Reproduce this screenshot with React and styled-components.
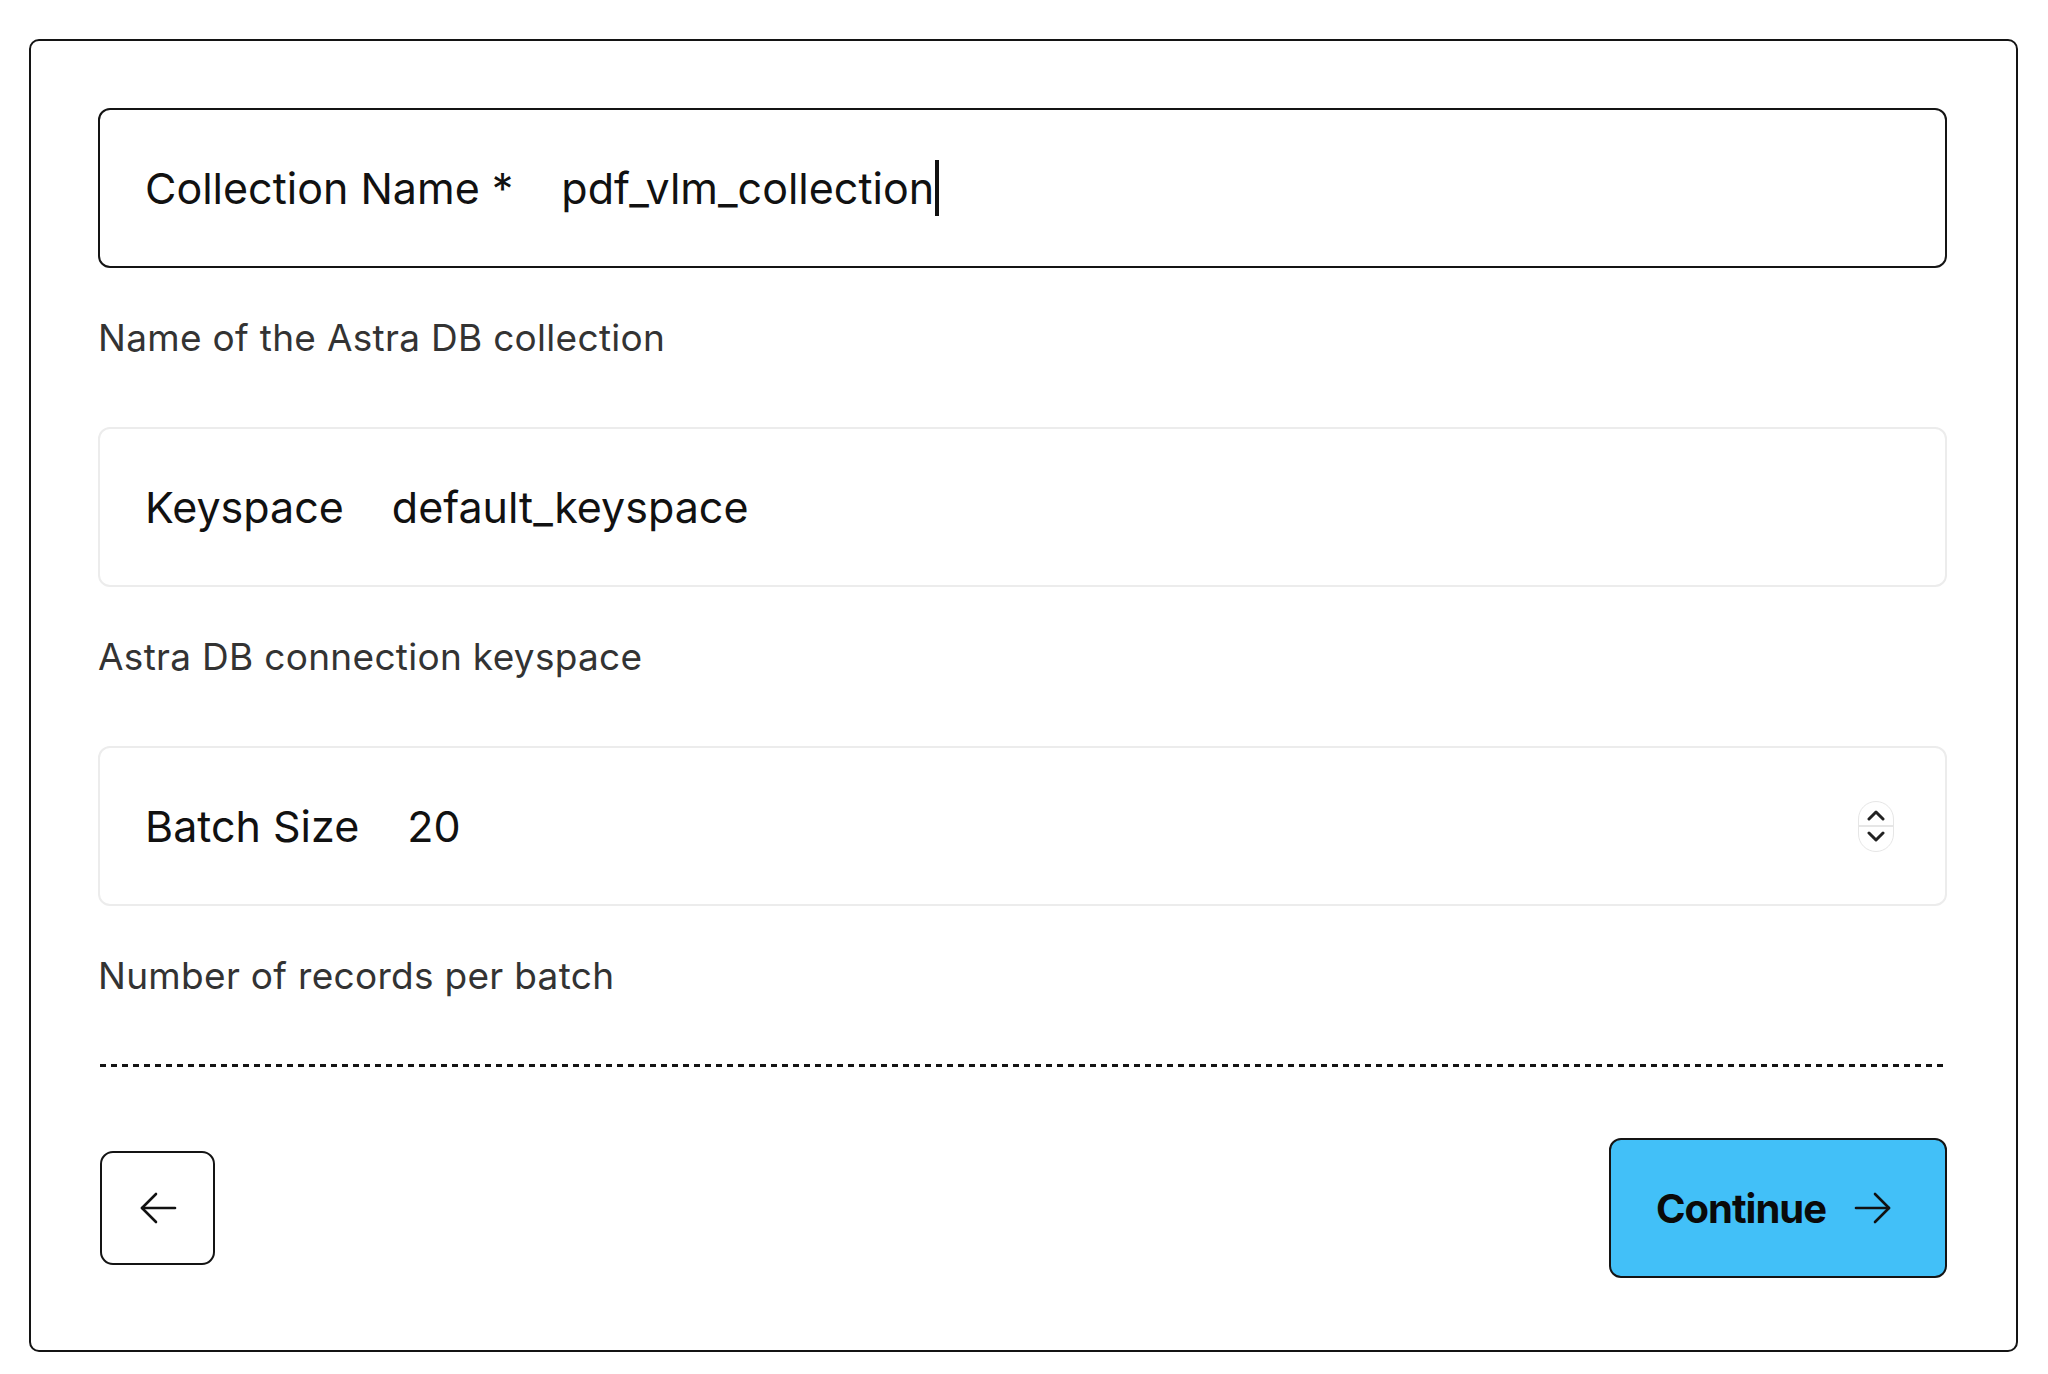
import React from "react";
import styled, { createGlobalStyle } from "styled-components";

const GlobalStyle = createGlobalStyle`
  html, body {
    margin: 0;
    padding: 0;
    background: #ffffff;
  }
  body {
    font-family: Inter, "Noto Sans", "Liberation Sans", sans-serif;
    color: #111111;
  }
  * {
    box-sizing: border-box;
  }
`;

const Page = styled.div`
  padding: 39px 0 0 29px;
`;

const Card = styled.div`
  width: 1989px;
  border: 2.5px solid #141414;
  border-radius: 10px;
  padding: 67px 69px 72px 67px;
  display: flex;
  flex-direction: column;
`;

const Fields = styled.div`
  display: flex;
  flex-direction: column;
  gap: 69px;
`;

const FieldGroup = styled.div`
  display: flex;
  flex-direction: column;
  gap: 49px;
`;

const Field = styled.div`
  height: 160px;
  display: flex;
  align-items: center;
  gap: 48px;
  padding: 0 51px 0 45px;
  border: 2px solid ${(p) => (p.$active ? "#141414" : "#ececec")};
  border-radius: 12px;
  font-size: 43px;
  line-height: 1;
`;

const Label = styled.span`
  color: #111111;
  white-space: nowrap;
`;

const Value = styled.span`
  color: #111111;
  white-space: nowrap;
  display: inline-flex;
  align-items: center;
`;

const Caret = styled.span`
  display: inline-block;
  width: 3.5px;
  height: 56px;
  background: #111111;
  margin-left: 1px;
`;

const Help = styled.div`
  font-size: 37px;
  line-height: 41px;
  letter-spacing: 0.3px;
  color: #333333;
`;

const Spinner = styled.div`
  margin-left: auto;
  width: 36px;
  height: 51px;
  border: 1.5px solid #e6e6e6;
  border-radius: 18px;
  display: flex;
  flex-direction: column;
  align-items: center;
  justify-content: center;
  svg {
    display: block;
  }
`;

const SpinDivider = styled.div`
  width: 100%;
  height: 1.5px;
  background: #e6e6e6;
  margin: 4px 0;
`;

const Divider = styled.div`
  margin: 68px 1px 0 2px;
  height: 3px;
  background-image: repeating-linear-gradient(
    to right,
    #141414 0 6px,
    transparent 6px 11px
  );
`;

const Actions = styled.div`
  margin-top: 71px;
  padding-left: 2px;
  display: flex;
  align-items: center;
  justify-content: space-between;
`;

const BackButton = styled.button`
  width: 115px;
  height: 114px;
  border: 2px solid #141414;
  border-radius: 13px;
  background: #ffffff;
  display: flex;
  align-items: center;
  justify-content: center;
  padding: 0;
  cursor: pointer;
`;

const ContinueButton = styled.button`
  width: 338px;
  height: 140px;
  border: 2px solid #141414;
  border-radius: 12px;
  background: #42c0f8;
  display: flex;
  align-items: center;
  justify-content: center;
  gap: 28px;
  padding: 0 8px 0 0;
  font-family: Inter, "Noto Sans", "Liberation Sans", sans-serif;
  font-size: 40px;
  font-weight: 700;
  letter-spacing: -1px;
  color: #0a0a0a;
  cursor: pointer;
`;

function Arrow({ dir = "left" }) {
  const flip = dir === "right" ? "scale(-1,1) translate(-38,0)" : undefined;
  return (
    <svg width="38" height="32" viewBox="0 0 38 32" fill="none">
      <g transform={flip} stroke="#111" strokeWidth="2.6" strokeLinecap="round" strokeLinejoin="round">
        <path d="M3 16 H36" />
        <path d="M17 2 L3 16 L17 30" />
      </g>
    </svg>
  );
}

function Chevron({ up }) {
  return (
    <svg width="18" height="11" viewBox="0 0 18 11" fill="none">
      <path
        d={up ? "M2 9 L9 2 L16 9" : "M2 2 L9 9 L16 2"}
        stroke="#222"
        strokeWidth="3"
        strokeLinecap="round"
        strokeLinejoin="round"
      />
    </svg>
  );
}

export default function App() {
  return (
    <>
      <GlobalStyle />
      <Page>
        <Card>
          <Fields>
            <FieldGroup>
              <Field $active>
                <Label>Collection Name *</Label>
                <Value>
                  pdf_vlm_collection
                  <Caret />
                </Value>
              </Field>
              <Help>Name of the Astra DB collection</Help>
            </FieldGroup>
            <FieldGroup>
              <Field>
                <Label>Keyspace</Label>
                <Value>default_keyspace</Value>
              </Field>
              <Help>Astra DB connection keyspace</Help>
            </FieldGroup>
            <FieldGroup>
              <Field>
                <Label>Batch Size</Label>
                <Value>20</Value>
                <Spinner>
                  <Chevron up />
                  <SpinDivider />
                  <Chevron />
                </Spinner>
              </Field>
              <Help>Number of records per batch</Help>
            </FieldGroup>
          </Fields>
          <Divider />
          <Actions>
            <BackButton aria-label="Back">
              <Arrow dir="left" />
            </BackButton>
            <ContinueButton>
              Continue
              <Arrow dir="right" />
            </ContinueButton>
          </Actions>
        </Card>
      </Page>
    </>
  );
}
